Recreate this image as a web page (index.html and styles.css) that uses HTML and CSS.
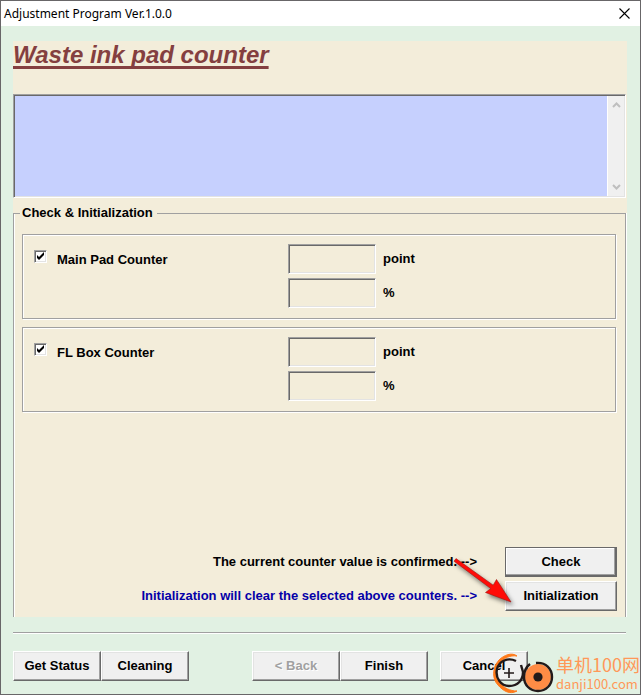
FILE: index.html
```html
<!DOCTYPE html>
<html lang="en">

<head>
    <meta charset="UTF-8">
    <meta name="viewport" content="width=device-width, initial-scale=1.0">
    <title>Adjustment Program Ver.1.0.0</title>
    <link rel="stylesheet" href="styles.css">
</head>

<body>
    <div class="window">
        <header class="titlebar">
            <span class="titlebar-text">Adjustment Program Ver.1.0.0</span>
            <button class="close" type="button" aria-label="Close">
                <svg width="11" height="11" viewBox="0 0 11 11"><path d="M0.5 0.5L10.5 10.5M10.5 0.5L0.5 10.5" stroke="#000" stroke-width="1.1" fill="none"/></svg>
            </button>
        </header>

        <main class="page">
            <h1>Waste ink pad counter</h1>

            <!-- Message log -->
            <div class="log">
                <textarea class="log-text" aria-label="Messages" readonly></textarea>
                <div class="scrollbar">
                    <button class="scroll-button" type="button" aria-label="Scroll up" disabled>
                        <svg width="9" height="6" viewBox="0 0 9 6"><path d="M1 5L4.5 1.5L8 5" stroke="#bfbfbf" stroke-width="2" fill="none"/></svg>
                    </button>
                    <button class="scroll-button" type="button" aria-label="Scroll down" disabled>
                        <svg width="9" height="6" viewBox="0 0 9 6"><path d="M1 1L4.5 4.5L8 1" stroke="#bfbfbf" stroke-width="2" fill="none"/></svg>
                    </button>
                </div>
            </div>

            <fieldset class="group">
                <legend>Check &amp; Initialization</legend>

                <!-- Counters -->
                <div class="counter">
                    <input class="tick" type="checkbox" id="main-pad" checked>
                    <label class="counter-name" for="main-pad">Main Pad Counter</label>
                    <div class="values">
                        <div class="value">
                            <input class="field" type="text" id="main-point" readonly>
                            <label for="main-point">point</label>
                        </div>
                        <div class="value">
                            <input class="field" type="text" id="main-percent" readonly>
                            <label for="main-percent">%</label>
                        </div>
                    </div>
                </div>
                <div class="counter">
                    <input class="tick" type="checkbox" id="fl-box" checked>
                    <label class="counter-name" for="fl-box">FL Box Counter</label>
                    <div class="values">
                        <div class="value">
                            <input class="field" type="text" id="fl-point" readonly>
                            <label for="fl-point">point</label>
                        </div>
                        <div class="value">
                            <input class="field" type="text" id="fl-percent" readonly>
                            <label for="fl-percent">%</label>
                        </div>
                    </div>
                </div>

                <!-- Actions -->
                <div class="actions">
                    <div class="action">
                        <span>The current counter value is confirmed. --&gt;</span>
                        <button class="button wide focused" type="button">Check</button>
                    </div>
                    <div class="action">
                        <span class="warning">Initialization will clear the selected above counters. --&gt;</span>
                        <button class="button wide" type="button">Initialization</button>
                    </div>
                    <svg class="arrow" width="72" height="60" viewBox="0 0 72 60">
                        <path d="M8 10.2L10 7.6L47.2 34.2L50.5 28.5L65 51L39.5 41.5L44.8 37.6Z" fill="#ff0c08" stroke="#a01410" stroke-width="0.6"/>
                    </svg>
                </div>
            </fieldset>
        </main>

        <footer class="footer">
            <button class="button" type="button">Get Status</button>
            <button class="button" type="button">Cleaning</button>
            <button class="button back" type="button" disabled>&lt; Back</button>
            <button class="button" type="button">Finish</button>
            <button class="button cancel" type="button">Cancel</button>
        </footer>

        <div class="watermark">
            <svg width="64" height="42" viewBox="0 0 64 42">
                <path d="M25 4C20 0 12 3 7 8C0 16 0 27 6 33C11 39 18 43 25 39C18 39 12 36 8 31C3 25 3 17 8 11C12 6 18 3 25 4Z" fill="#ff7a1a" stroke="#ff7a1a" stroke-width="1"/>
                <path d="M24 9C16 5 7 9 5 17C3 26 9 34 17 34C26 34 31 28 31 20L29 13" stroke="#221a1a" stroke-width="2.4" fill="none"/>
                <path d="M17 16V26M12 21H22" stroke="#221a1a" stroke-width="1.6"/>
                <circle cx="46" cy="25" r="13" fill="#ff8c45"/>
                <path d="M44 11C54 10 60 17 60 25C60 33 54 39 46 39C38 39 32 33 32 25C32 20 34 15 38 12" stroke="#221a1a" stroke-width="2.4" fill="none"/>
                <circle cx="46" cy="25" r="4.6" fill="#221a1a"/>
            </svg>
            <div class="watermark-text">
                <span class="site" lang="zh-CN">单机100网</span>
                <span class="domain">danji100.com</span>
            </div>
        </div>
    </div>
</body>

</html>
```

FILE: styles.css
```css
* {
    box-sizing: border-box;
}

body {
    margin: 0;
    font-family: "Liberation Sans", Arial, sans-serif;
    font-size: 13px;
    font-weight: bold;
    line-height: 16px;
    color: #000;
}

.window {
    position: relative;
    display: flex;
    flex-direction: column;
    min-height: 100vh;
    border: 1px solid #686668;
    background-color: #e1f1e3;
}

.titlebar {
    display: flex;
    justify-content: space-between;
    align-items: center;
    height: 25px;
    padding: 0 10px 0 3px;
    background-color: #fff;
}

.titlebar-text {
    font-family: "Noto Sans", sans-serif;
    font-size: 12px;
    font-weight: normal;
}

.close {
    display: flex;
    padding: 0;
    border: none;
    background: none;
}

.page {
    flex: 1;
    display: flex;
    flex-direction: column;
    margin: 15px 13px 0 12px;
    background-color: #f3edda;
}

h1 {
    height: 53px;
    margin: 0;
    font-size: 24px;
    line-height: 28px;
    font-style: italic;
    color: #843f40;
    text-decoration: underline;
    text-decoration-thickness: 3px;
    text-underline-offset: 3px;
    text-decoration-skip-ink: none;
}

/* Sunken edges */
.log,
.field,
.tick {
    border: 1px solid;
    border-color: #a0a0a0 #fff #fff #a0a0a0;
    box-shadow: inset 1px 1px 0 #696969, inset -1px -1px 0 #e3e3e3;
}

.log {
    display: flex;
    height: 104px;
    margin-right: 1px;
    padding: 1px;
    background-color: #c6d0fe;
}

.log-text {
    flex: 1;
    border: none;
    background: none;
    resize: none;
    outline: none;
}

.scrollbar {
    display: flex;
    flex-direction: column;
    justify-content: space-between;
    width: 17px;
    padding: 6px 0;
    border-left: 1px solid #fff;
    background-color: #f0f0f0;
}

.scroll-button {
    display: flex;
    justify-content: center;
    padding: 0;
    border: none;
    background: none;
}

.group {
    flex: 1;
    min-width: 0;
    margin: 7px 1px 0 0;
    padding: 13px 8px 6px;
    border: 1px solid #a0a0a0;
    border-bottom: none;
    box-shadow: inset 1px 0 0 #fff, 1px 0 0 #fff;
}

legend {
    margin-left: -2px;
    padding: 0 4px 0 2px;
}

.counter {
    display: flex;
    align-items: flex-start;
    height: 85px;
    margin: 0 1px 8px 0;
    padding: 9px 11px;
    border: 1px solid #a0a0a0;
    box-shadow: 1px 1px 0 #fff, inset 1px 1px 0 #fff;
}

.tick {
    appearance: none;
    width: 13px;
    height: 13px;
    margin: 6px 10px 0 0;
    background: #fff center / 9px 9px no-repeat;
}

.tick:checked {
    background-image: url("data:image/svg+xml,%3Csvg xmlns='http://www.w3.org/2000/svg' viewBox='0 0 9 9'%3E%3Cpath d='M1 3v3l2 2 5-5V0L3 5z'/%3E%3C/svg%3E");
}

.counter-name {
    flex: 0 0 231px;
    padding-top: 8px;
}

.values {
    display: flex;
    flex-direction: column;
    gap: 4px;
}

.value {
    display: flex;
    align-items: center;
    gap: 7px;
}

.field {
    width: 88px;
    height: 30px;
    background-color: #f3edda;
}

.actions {
    position: relative;
    display: flex;
    flex-direction: column;
    gap: 4px;
    margin-top: 135px;
}

.action {
    display: flex;
    justify-content: flex-end;
    align-items: center;
    gap: 28px;
}

.warning {
    color: #0500a8;
}

.arrow {
    position: absolute;
    right: 99px;
    bottom: 0;
    filter: drop-shadow(2px 3px 2px rgba(0, 0, 0, 0.5));
}

.button {
    width: 88px;
    height: 30px;
    padding: 0;
    border: 1px solid;
    border-color: #fff #696969 #696969 #fff;
    box-shadow: inset -1px -1px 0 #a0a0a0, inset 1px 1px 0 #e3e3e3;
    background-color: #f0f0f0;
    font: inherit;
    color: #000;
}

.button:disabled {
    color: #a0a0a0;
    text-shadow: 1px 1px 0 #fff;
}

.wide {
    width: 112px;
}

.focused {
    border-color: #696969;
    box-shadow: inset -1px -1px 0 #696969, inset -2px -2px 0 #a0a0a0, inset 1px 1px 0 #fff;
}

.footer {
    display: flex;
    margin: 15px 14px 0 12px;
    padding: 18px 0 13px;
    border-top: 1px solid #a0a0a0;
    box-shadow: inset 0 1px 0 #fff;
}

.back {
    margin-left: 63px;
}

.cancel {
    margin-left: 12px;
}

.watermark {
    position: absolute;
    right: 0;
    bottom: 0;
    display: flex;
    align-items: center;
    color: #ff9858;
    font-weight: normal;
}

.watermark-text {
    display: flex;
    flex-direction: column;
    font-family: "Noto Sans CJK SC", sans-serif;
}

.site {
    font-size: 18px;
    line-height: 22px;
}

.domain {
    font-size: 13px;
    line-height: 18px;
}
```
